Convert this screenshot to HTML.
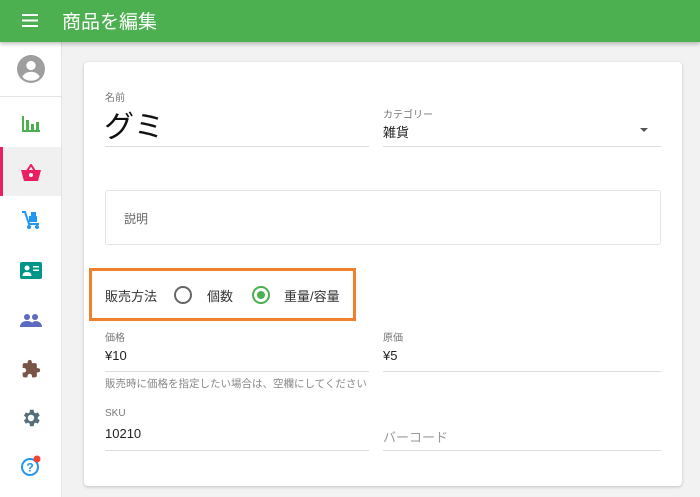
<!DOCTYPE html>
<html><head><meta charset="utf-8"><style>
*{margin:0;padding:0;box-sizing:border-box}
body{width:700px;height:497px;overflow:hidden;background:#f2f2f2;font-family:"Liberation Sans","Noto Sans CJK JP",sans-serif;position:relative}
.hdr{position:absolute;left:0;top:0;width:700px;height:42px;background:#4caf50;box-shadow:0 2px 4px rgba(0,0,0,.25);z-index:2}
.hdr .t{position:absolute;left:62px;top:7px;color:#fff;font-size:19px}
.side{position:absolute;left:0;top:42px;width:62px;height:455px;background:#fff;border-right:1px solid #e4e4e4}
.ic{position:absolute;left:0;width:62px;display:flex;justify-content:center;align-items:center}
.card{position:absolute;left:84px;top:62px;width:598px;height:424px;background:#fff;border-radius:4px;box-shadow:0 1px 3px rgba(0,0,0,.2)}
.a{position:absolute;white-space:nowrap}
.lbl{font-size:10px;color:#777}
.line{position:absolute;height:1px;background:#ddd}
</style></head><body>
<div class="hdr">
<svg style="position:absolute;left:22px;top:14px" width="16" height="13"><rect y="0" width="16" height="2" fill="#fff"/><rect y="5.5" width="16" height="2" fill="#fff"/><rect y="11" width="16" height="2" fill="#fff"/></svg>
<div class="t">商品を編集</div></div>
<div class="side">
<div class="ic" style="top:0;height:55px;border-bottom:1px solid #e4e4e4"><svg width="28" height="28" viewBox="0 0 24 24"><circle cx="12" cy="12" r="12" fill="#9e9e9e"/><circle cx="12" cy="9" r="4" fill="#fff"/><path d="M4.5 18.5c2-3 4.5-4 7.5-4s5.5 1 7.5 4c-2 2.5-4.5 3.5-7.5 3.5s-5.5-1-7.5-3.5z" fill="#fff"/></svg></div>
<div class="ic" style="top:70px;height:24px"><svg width="18" height="16"><rect x="0" y="0" width="2" height="16" fill="#4caf50"/><rect x="0" y="14" width="18" height="2" fill="#4caf50"/><rect x="4" y="4" width="3" height="10" fill="#4caf50"/><rect x="9" y="8" width="3" height="6" fill="#4caf50"/><rect x="14" y="6" width="3" height="8" fill="#4caf50"/></svg></div>
<div style="position:absolute;left:0;top:105px;width:61px;height:49px;background:#f0f0f0;border-left:3px solid #e91e63"></div>
<div class="ic" style="top:118px;height:24px"><svg width="20" height="17" viewBox="0 0 20 17"><path d="M6 7L10 1L14 7" stroke="#e91e63" stroke-width="2" fill="none"/><path d="M0 6h20l-3 11H3z" fill="#e91e63"/><circle cx="10" cy="11" r="2" fill="#fff"/></svg></div>
<div class="ic" style="top:166px;height:24px"><svg width="20" height="20" viewBox="0 0 20 20"><path d="M1 2h3l4 12h10" stroke="#2196f3" stroke-width="2" fill="none"/><rect x="8" y="6" width="8" height="6" fill="#2196f3"/><rect x="10" y="2" width="5" height="4" fill="#2196f3"/><circle cx="8" cy="17" r="2" fill="#2196f3"/><circle cx="16" cy="17" r="2" fill="#2196f3"/></svg></div>
<div class="ic" style="top:216px;height:24px"><svg width="22" height="17"><rect width="22" height="17" rx="2" fill="#009688"/><circle cx="7" cy="6" r="2.5" fill="#fff"/><path d="M2.5 14c0-3 2-4 4.5-4s4.5 1 4.5 4z" fill="#fff"/><rect x="13" y="4" width="6" height="1.5" fill="#fff"/><rect x="13" y="7.5" width="6" height="1.5" fill="#fff"/></svg></div>
<div class="ic" style="top:266px;height:24px"><svg width="22" height="14" viewBox="0 0 22 14"><circle cx="7" cy="4" r="3" fill="#5c6bc0"/><circle cx="15" cy="4" r="3" fill="#5c6bc0"/><path d="M0 14c0-4 3-6 7-6s7 2 7 6z" fill="#5c6bc0"/><path d="M11 14c0-3 1-5 4-6 4 0 7 2 7 6z" fill="#5c6bc0"/></svg></div>
<div class="ic" style="top:315px;height:24px"><svg width="20" height="20" viewBox="0 0 24 24"><path d="M20.5 11H19V7c0-1.1-.9-2-2-2h-4V3.5a2.5 2.5 0 0 0-5 0V5H4c-1.1 0-2 .9-2 2v3.8h1.5c1.5 0 2.7 1.2 2.7 2.7S5 16.2 3.5 16.2H2V20c0 1.1.9 2 2 2h3.8v-1.5c0-1.5 1.2-2.7 2.7-2.7s2.7 1.2 2.7 2.7V22H17c1.1 0 2-.9 2-2v-4h1.5a2.5 2.5 0 0 0 0-5z" fill="#795548"/></svg></div>
<div class="ic" style="top:364px;height:24px"><svg width="22" height="22" viewBox="0 0 24 24"><path d="M19.4 13a7.5 7.5 0 0 0 0-2l2.1-1.6-2-3.5-2.5 1a7 7 0 0 0-1.7-1L14.9 3h-4l-.4 2.9a7 7 0 0 0-1.7 1l-2.5-1-2 3.5L6.4 11a7.5 7.5 0 0 0 0 2l-2.1 1.6 2 3.5 2.5-1a7 7 0 0 0 1.7 1l.4 2.9h4l.4-2.9a7 7 0 0 0 1.7-1l2.5 1 2-3.5zM12 15.5a3.5 3.5 0 1 1 0-7 3.5 3.5 0 0 1 0 7z" fill="#546e7a"/></svg></div>
<div class="ic" style="top:412px;height:24px"><svg width="24" height="24" viewBox="0 0 24 24"><circle cx="11" cy="13" r="8" stroke="#2196f3" stroke-width="2" fill="none"/><text x="11" y="17.5" font-size="12" font-weight="bold" fill="#2196f3" text-anchor="middle" font-family="Liberation Sans">?</text><circle cx="18" cy="5" r="3.5" fill="#f44336"/></svg></div>
</div>
<div class="card">
<div class="a lbl" style="left:21px;top:27px">名前</div>
<div class="a" style="left:20px;top:40px;font-size:30px;color:#111">グミ</div>
<div class="line" style="left:21px;top:84px;width:264px"></div>
<div class="a lbl" style="left:299px;top:44px">カテゴリー</div>
<div class="a" style="left:299px;top:60px;font-size:13px;color:#222">雑貨</div>
<div class="a" style="left:556px;top:66px;width:0;height:0;border-left:4px solid transparent;border-right:4px solid transparent;border-top:4px solid #555"></div>
<div class="line" style="left:299px;top:84px;width:278px"></div>
<div style="position:absolute;left:21px;top:128px;width:556px;height:55px;border:1px solid #e4e4e4;border-radius:3px"></div>
<div class="a" style="left:40px;top:148px;font-size:12px;color:#666">説明</div>
<div style="position:absolute;left:5px;top:206px;width:267px;height:53px;border:3px solid #f0802c"></div>
<div class="a" style="left:21px;top:224px;font-size:13px;color:#333">販売方法</div>
<div style="position:absolute;left:90px;top:224px;width:18px;height:18px;border:2px solid #666;border-radius:50%"></div>
<div class="a" style="left:123px;top:224px;font-size:13px;color:#333">個数</div>
<div style="position:absolute;left:168px;top:224px;width:18px;height:18px;border:2px solid #4caf50;border-radius:50%"><div style="position:absolute;left:3px;top:3px;width:8px;height:8px;background:#4caf50;border-radius:50%"></div></div>
<div class="a" style="left:200px;top:224px;font-size:13px;color:#333">重量/容量</div>
<div class="a lbl" style="left:21px;top:267px">価格</div>
<div class="a" style="left:21px;top:286px;font-size:13px;color:#222">¥10</div>
<div class="line" style="left:21px;top:309px;width:264px"></div>
<div class="a lbl" style="left:299px;top:267px">原価</div>
<div class="a" style="left:299px;top:286px;font-size:13px;color:#222">¥5</div>
<div class="line" style="left:299px;top:309px;width:278px"></div>
<div class="a" style="left:21px;top:314px;font-size:10.5px;color:#888">販売時に価格を指定したい場合は、空欄にしてください</div>
<div class="a lbl" style="left:21px;top:346px">SKU</div>
<div class="a" style="left:21px;top:364px;font-size:13px;color:#222">10210</div>
<div class="line" style="left:21px;top:388px;width:264px"></div>
<div class="a" style="left:299px;top:365px;font-size:13px;color:#999">バーコード</div>
<div class="line" style="left:299px;top:388px;width:278px"></div>
</div>
</body></html>
